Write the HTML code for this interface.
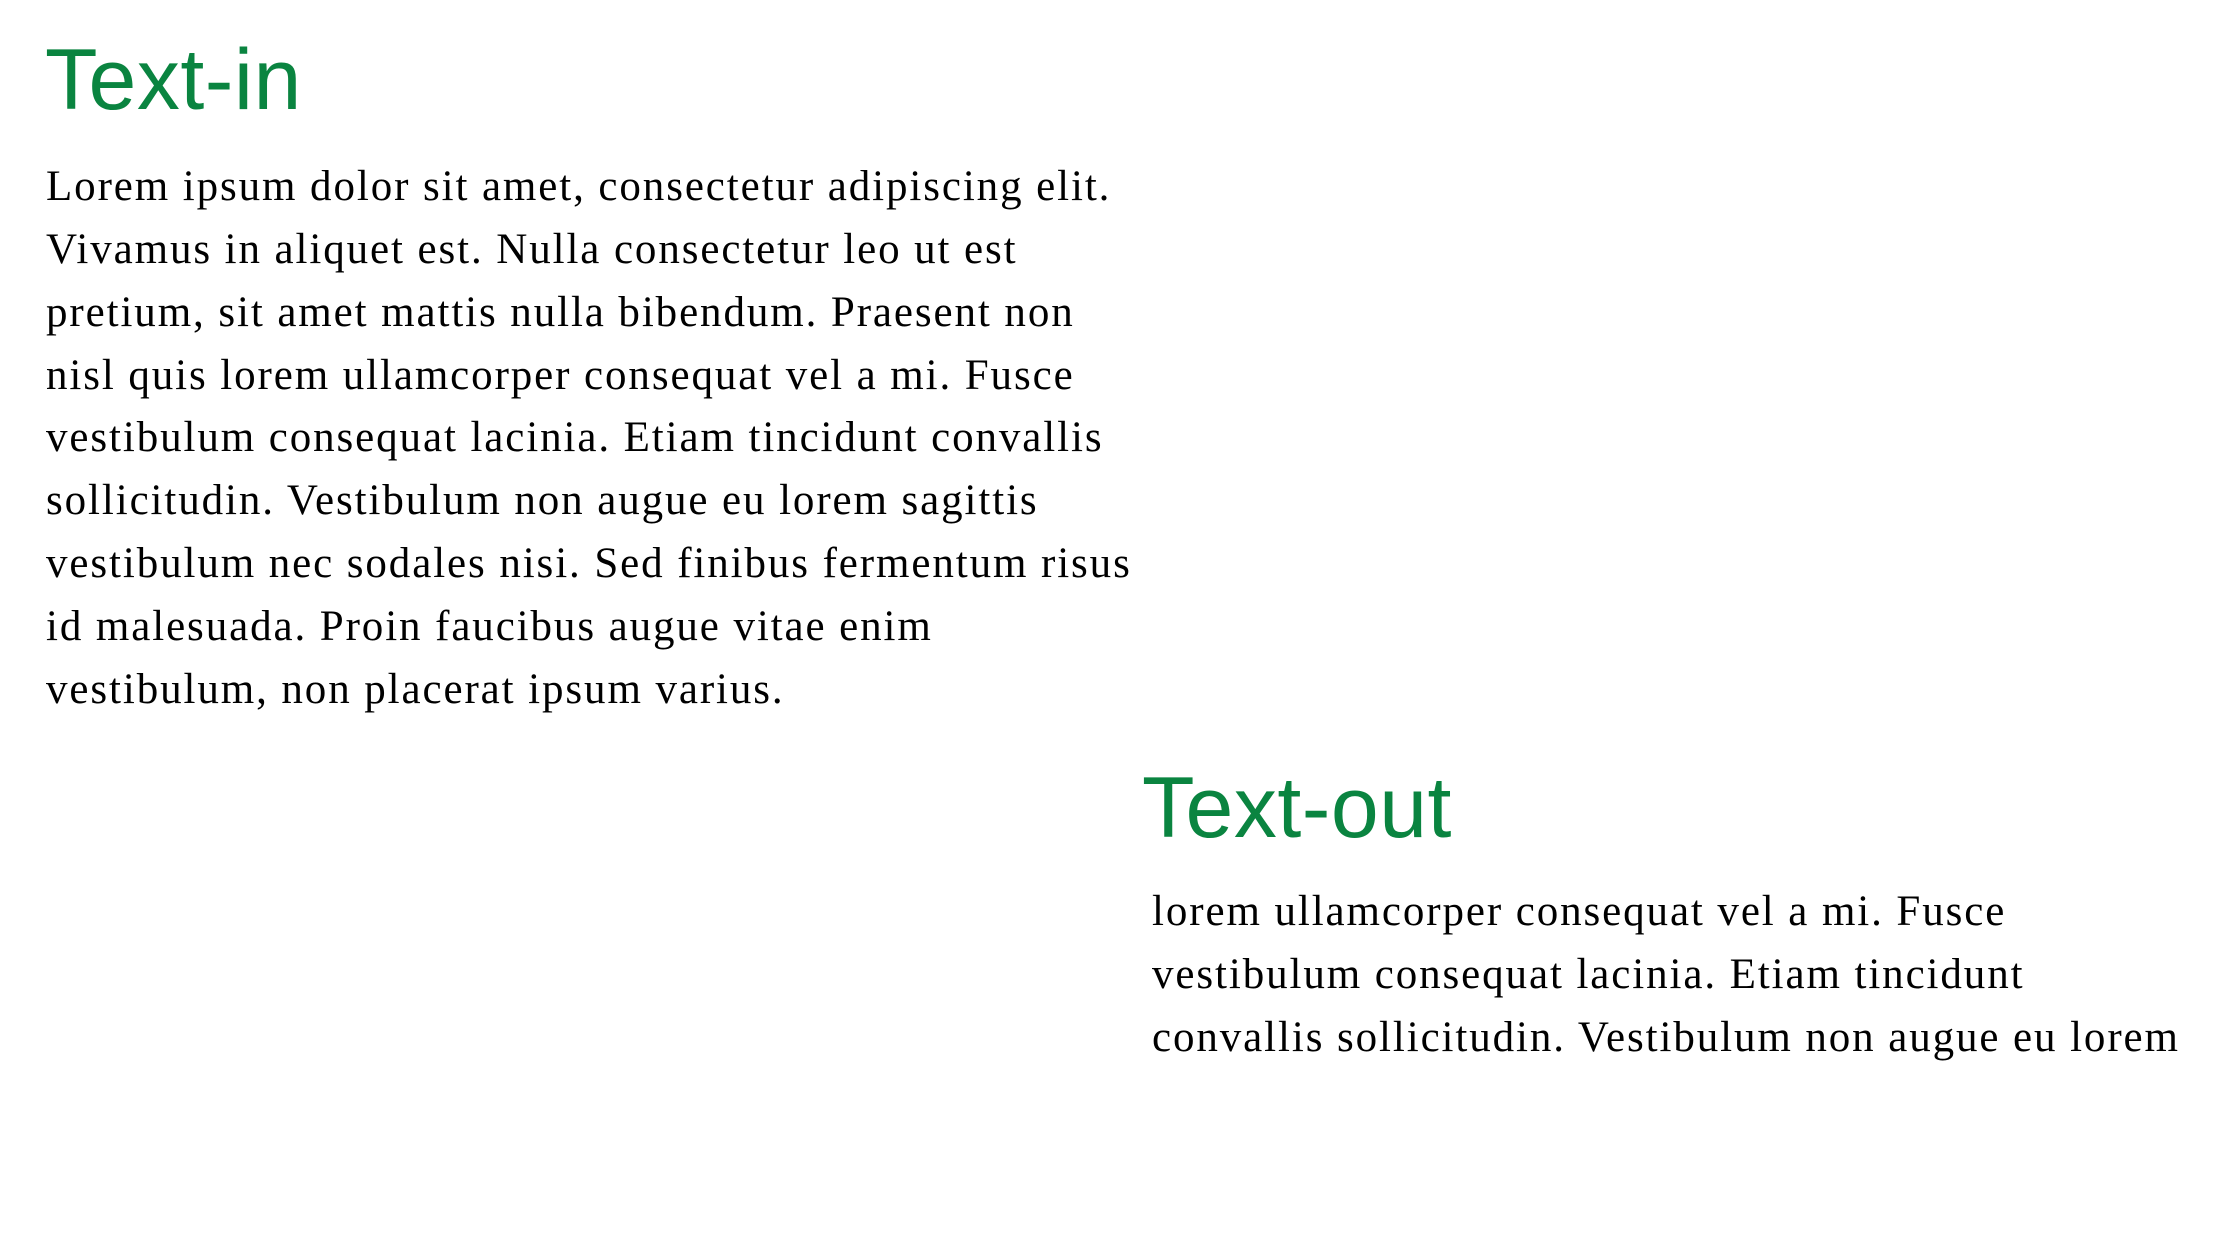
<!DOCTYPE html>
<html><head><style>
html,body{margin:0;padding:0;background:#fff;width:2240px;height:1260px;overflow:hidden;position:relative}
.h{position:absolute;font-family:"Liberation Sans",sans-serif;color:#0a8440;font-size:86px;line-height:1;white-space:nowrap;letter-spacing:0.5px}
.p{position:absolute;font-family:"Liberation Serif",serif;color:#000;font-size:43px;line-height:62.86px;letter-spacing:1.9px;white-space:nowrap}
.p div{height:62.86px}
</style></head><body>
<div class="h" style="left:45px;top:37px">Text-in</div>
<div class="p" style="left:46px;top:156px">
<div>Lorem ipsum dolor sit amet, consectetur adipiscing elit.</div>
<div>Vivamus in aliquet est. Nulla consectetur leo ut est</div>
<div>pretium, sit amet mattis nulla bibendum. Praesent non</div>
<div>nisl quis lorem ullamcorper consequat vel a mi. Fusce</div>
<div>vestibulum consequat lacinia. Etiam tincidunt convallis</div>
<div>sollicitudin. Vestibulum non augue eu lorem sagittis</div>
<div>vestibulum nec sodales nisi. Sed finibus fermentum risus</div>
<div>id malesuada. Proin faucibus augue vitae enim</div>
<div>vestibulum, non placerat ipsum varius.</div>
</div>
<div class="h" style="left:1142px;top:765px">Text-out</div>
<div class="p" style="left:1152px;top:881px">
<div>lorem ullamcorper consequat vel a mi. Fusce</div>
<div>vestibulum consequat lacinia. Etiam tincidunt</div>
<div>convallis sollicitudin. Vestibulum non augue eu lorem</div>
</div>
</body></html>
